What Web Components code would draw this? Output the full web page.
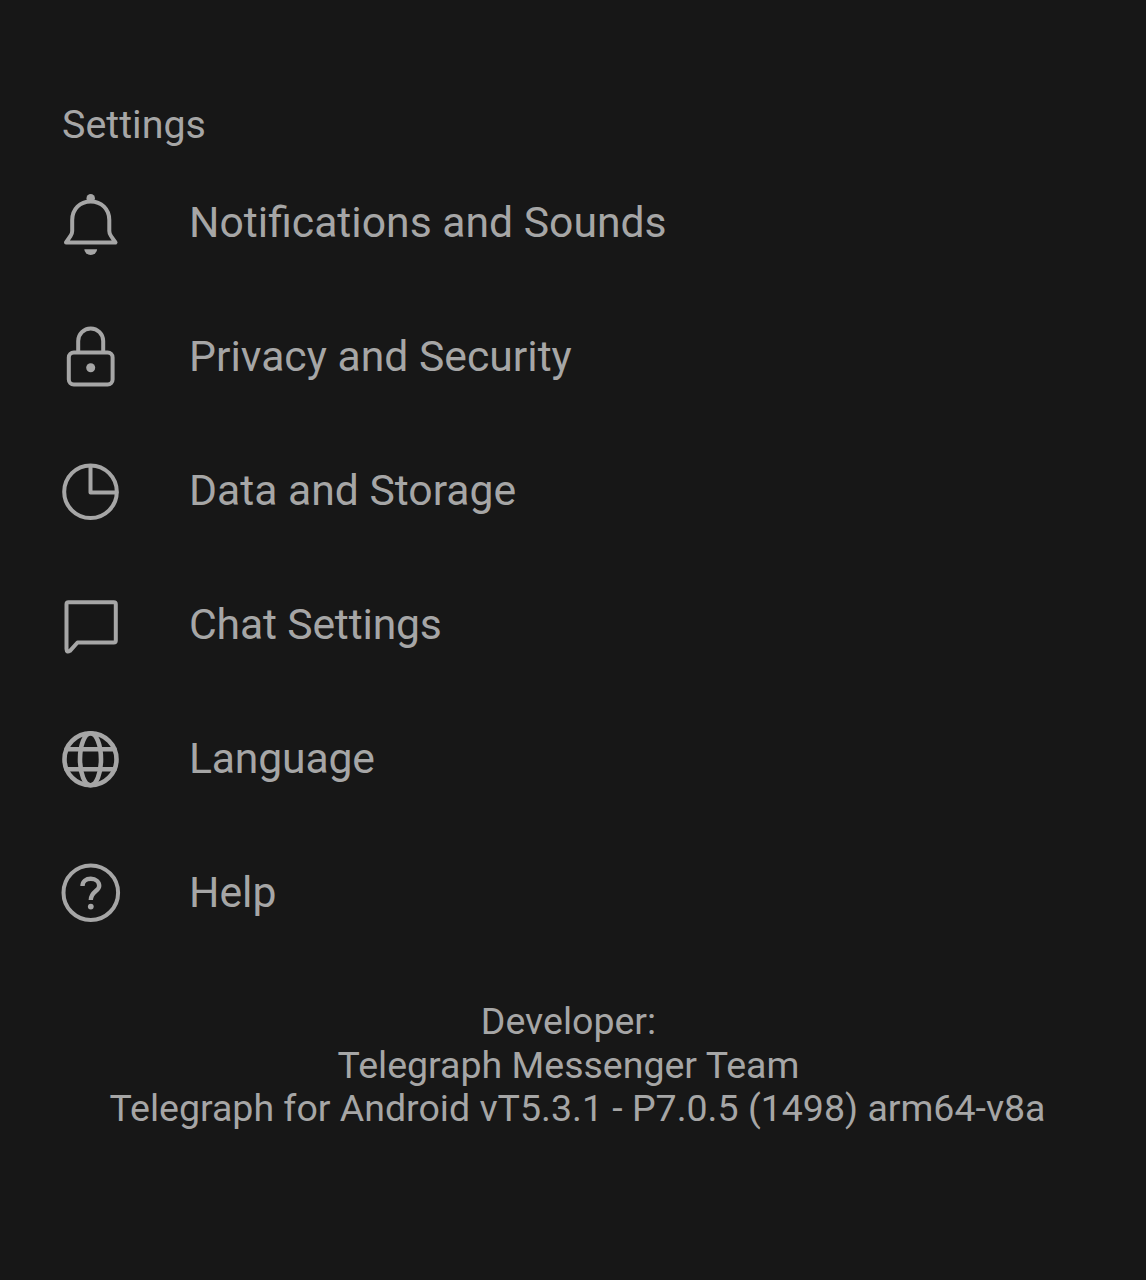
<!DOCTYPE html>
<html><head><meta charset="utf-8">
<style>html,body{margin:0;padding:0;background:#171717;}</style>
</head><body>
<settings-screen>
<section-title>Settings</section-title>
<menu-row label="Notifications and Sounds"><svg slot="icon" viewBox="0 0 64 64"><path d="M6 51.5 L10.5 45 Q12.2 42.5 12.2 40 V29 C12.2 18 20 10.5 30.7 10.5 C41.4 10.5 49.3 18 49.3 29 V40 Q49.3 42.5 51 45 L55.5 51.5 Z"/><circle class="f" cx="30.7" cy="7.3" r="4.2"/><path class="f" d="M24.3 58.2 H37.1 A6.4 5.8 0 0 1 24.3 58.2 Z"/></svg></menu-row>
<menu-row label="Privacy and Security"><svg slot="icon" viewBox="0 0 64 64"><rect x="8.8" y="27.5" width="43.8" height="32" rx="5"/><path d="M18.2 27 V16 a12.5 12.5 0 0 1 25 0 V27"/><circle class="f" cx="30.7" cy="42.7" r="4.5"/></svg></menu-row>
<menu-row label="Data and Storage"><svg slot="icon" viewBox="0 0 64 64"><circle cx="30.5" cy="32.7" r="26.3"/><path d="M30.5 7 V33.5 H56.5"/></svg></menu-row>
<menu-row label="Chat Settings" tight><svg slot="icon" viewBox="0 0 64 64"><path d="M8.5 9.2 H53.8 Q55.8 9.2 55.8 11.2 V47.5 Q55.8 49.5 53.8 49.5 H17.5 L10 57.8 Q6.5 59.8 6.5 56 V11.2 Q6.5 9.2 8.5 9.2 Z"/></svg></menu-row>
<menu-row label="Language" tight><svg slot="icon" viewBox="0 0 64 64" style="stroke-width:4.6"><circle cx="30.5" cy="32.3" r="26"/><ellipse cx="30.5" cy="32.3" rx="10.5" ry="26"/><path d="M6.5 22.3 H54.5 M6.5 42.3 H54.5"/></svg></menu-row>
<menu-row label="Help"><svg slot="icon" viewBox="0 0 64 64"><circle cx="30.8" cy="31.7" r="27.3"/><path d="M22.5 25 C22.5 20.5 26 17.8 30.8 17.8 C35.8 17.8 39.2 20.8 39.2 25 C39.2 30 30.8 30.5 30.8 39" style="stroke-width:4.4;stroke-linecap:butt"/><circle class="f" cx="30.8" cy="45.6" r="2.9"/></svg></menu-row>
<app-footer>
<footer-line short>Developer:</footer-line>
<footer-line short>Telegraph Messenger Team</footer-line>
<footer-line>Telegraph for Android vT5.3.1 - P7.0.5 (1498) arm64-v8a</footer-line>
</app-footer>
</settings-screen>
<script>
function def(name, html){
  customElements.define(name, class extends HTMLElement{
    constructor(){super();const r=this.attachShadow({mode:'open'});r.innerHTML=html;}
  });
}
def('settings-screen',`<style>:host{display:flex;flex-direction:column;width:1146px;height:1280px;box-sizing:border-box;background:#171717;color:#a6a6a6;font-family:Roboto,"Liberation Sans",sans-serif;padding-top:100px;overflow:hidden}</style><slot></slot>`);
def('section-title',`<style>:host{display:block;height:56px;box-sizing:border-box;padding-left:62px;font-size:39.4px;line-height:50px}</style><slot></slot>`);
customElements.define('menu-row',class extends HTMLElement{
  constructor(){super();const r=this.attachShadow({mode:'open'});
  r.innerHTML=`<style>:host{display:flex;align-items:center;height:134px;padding-left:60px;font-size:42.7px}
  :host([tight]) .l{letter-spacing:-.17px}
  ::slotted(svg){width:64px;height:64px;flex:none;overflow:visible;fill:none;stroke:#a6a6a6;stroke-width:4;stroke-linejoin:round;stroke-linecap:round}
  .l{margin-left:65px;padding-bottom:2px}</style><slot name="icon"></slot><span class="l"></span>`;
  r.querySelector('.l').textContent=this.getAttribute('label');}
});
def('app-footer',`<style>:host{display:flex;flex-direction:column;align-items:center;margin-top:40px;padding-left:9px;font-size:37.5px;line-height:43.5px}</style><slot></slot>`);
def('footer-line',`<style>:host{display:block;white-space:nowrap}:host([short]){padding-right:18px}</style><slot></slot>`);
</script>
<style>svg .f{fill:#a6a6a6;stroke:none}</style>
</body></html>
